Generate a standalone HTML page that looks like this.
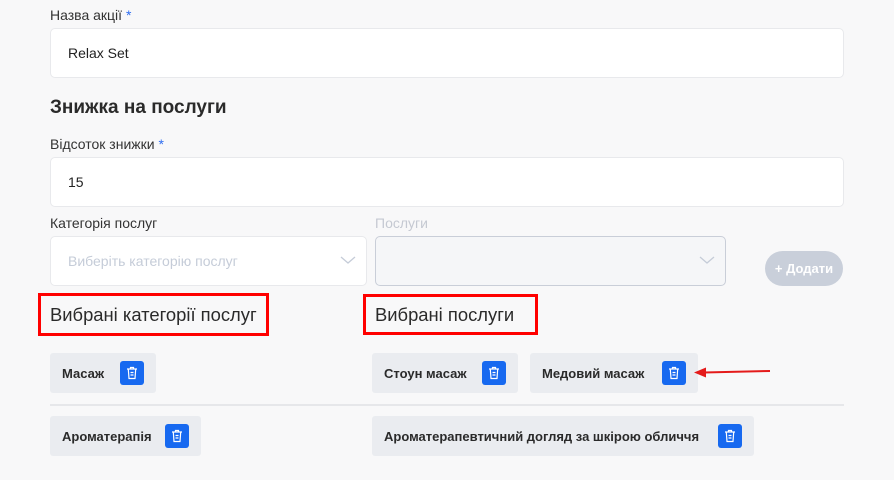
<!DOCTYPE html>
<html><head><meta charset="utf-8"><style>
body{margin:0;width:894px;height:480px;background:#f8f8f9;font-family:"Liberation Sans",sans-serif;position:relative;overflow:hidden;color:#222}
.a{position:absolute}
.lbl{font-size:14px;color:#333}
.lbl b{color:#2d6cf0;font-weight:normal}
.inp{background:#fff;border:1px solid #e8e9ec;border-radius:5px;box-sizing:border-box;font-size:14px;padding-left:17px;display:flex;align-items:center}
.chip{background:#eaecf0;border-radius:3px;height:40px;box-sizing:border-box;display:flex;align-items:center;padding-left:12px;font-size:13px;font-weight:bold;color:#2a2a2a;white-space:nowrap}
.tr{width:24px;height:24px;background:#1769f0;border-radius:3px;position:absolute;top:8px;display:flex;align-items:center;justify-content:center}
.red{border:3px solid #f00;box-sizing:border-box;font-size:18.4px;color:#2a2a2a;padding-left:9px;display:flex;align-items:center}
</style></head><body>
<div class="a lbl" style="left:50px;top:7px">Назва акції <b>*</b></div>
<div class="a inp" style="left:50px;top:28px;width:794px;height:50px">Relax Set</div>
<div class="a" style="left:50px;top:97px;font-size:19px;font-weight:bold;color:#2a2a2a">Знижка на послуги</div>
<div class="a lbl" style="left:50px;top:136px">Відсоток знижки <b>*</b></div>
<div class="a inp" style="left:50px;top:157px;width:794px;height:50px">15</div>
<div class="a lbl" style="left:50px;top:215px">Категорія послуг</div>
<div class="a lbl" style="left:375px;top:215px;color:#c5c9d2">Послуги</div>
<div class="a inp" style="left:50px;top:236px;width:317px;height:50px;color:#c5ccd8">Виберіть категорію послуг</div>
<svg class="a" style="left:340px;top:255px" width="16" height="10"><path d="M1 2l7 6 7-6" fill="none" stroke="#c5ccd8" stroke-width="1.3"/></svg>
<div class="a inp" style="left:375px;top:236px;width:351px;height:50px;background:#f5f6f8;border-color:#c9ced8"></div>
<svg class="a" style="left:699px;top:255px" width="16" height="10"><path d="M1 2l7 6 7-6" fill="none" stroke="#c5ccd8" stroke-width="1.3"/></svg>
<div class="a" style="left:765px;top:251px;width:78px;height:35px;border-radius:18px;background:#c9cfda;color:#fff;font-size:13px;font-weight:bold;display:flex;align-items:center;justify-content:center">+ Додати</div>
<div class="a red" style="left:38px;top:293px;width:231px;height:43px">Вибрані категорії послуг</div>
<div class="a red" style="left:363px;top:294px;width:175px;height:41px">Вибрані послуги</div>

<div class="a chip" style="left:50px;top:353px;width:106px">Масаж<div class="tr" style="left:70px">T</div></div>
<div class="a chip" style="left:372px;top:353px;width:146px">Стоун масаж<div class="tr" style="left:110px">T</div></div>
<div class="a chip" style="left:530px;top:353px;width:168px">Медовий масаж<div class="tr" style="left:132px">T</div></div>
<div class="a" style="left:50px;top:404px;width:794px;height:2px;background:#e6e7ea"></div>
<div class="a chip" style="left:50px;top:416px;width:151px">Ароматерапія<div class="tr" style="left:115px">T</div></div>
<div class="a chip" style="left:372px;top:416px;width:382px">Ароматерапевтичний догляд за шкірою обличчя<div class="tr" style="left:346px">T</div></div>
<svg class="a" style="left:690px;top:365px" width="85" height="14"><path d="M80 6L14 7.5" stroke="#e41b1b" stroke-width="2"/><path d="M4 7.5l12-5v10z" fill="#e41b1b"/></svg>
<script>
document.querySelectorAll('.tr').forEach(function(e){e.innerHTML='<svg width="12" height="14" viewBox="0 0 12 14"><path d="M1 3h10M4.5 3V1.5h3V3M2.3 3l.7 9.5h6l.7-9.5M4.5 6.5h3M4.5 9h3" fill="none" stroke="#fff" stroke-width="1.2"/></svg>';});
</script>
</body></html>
